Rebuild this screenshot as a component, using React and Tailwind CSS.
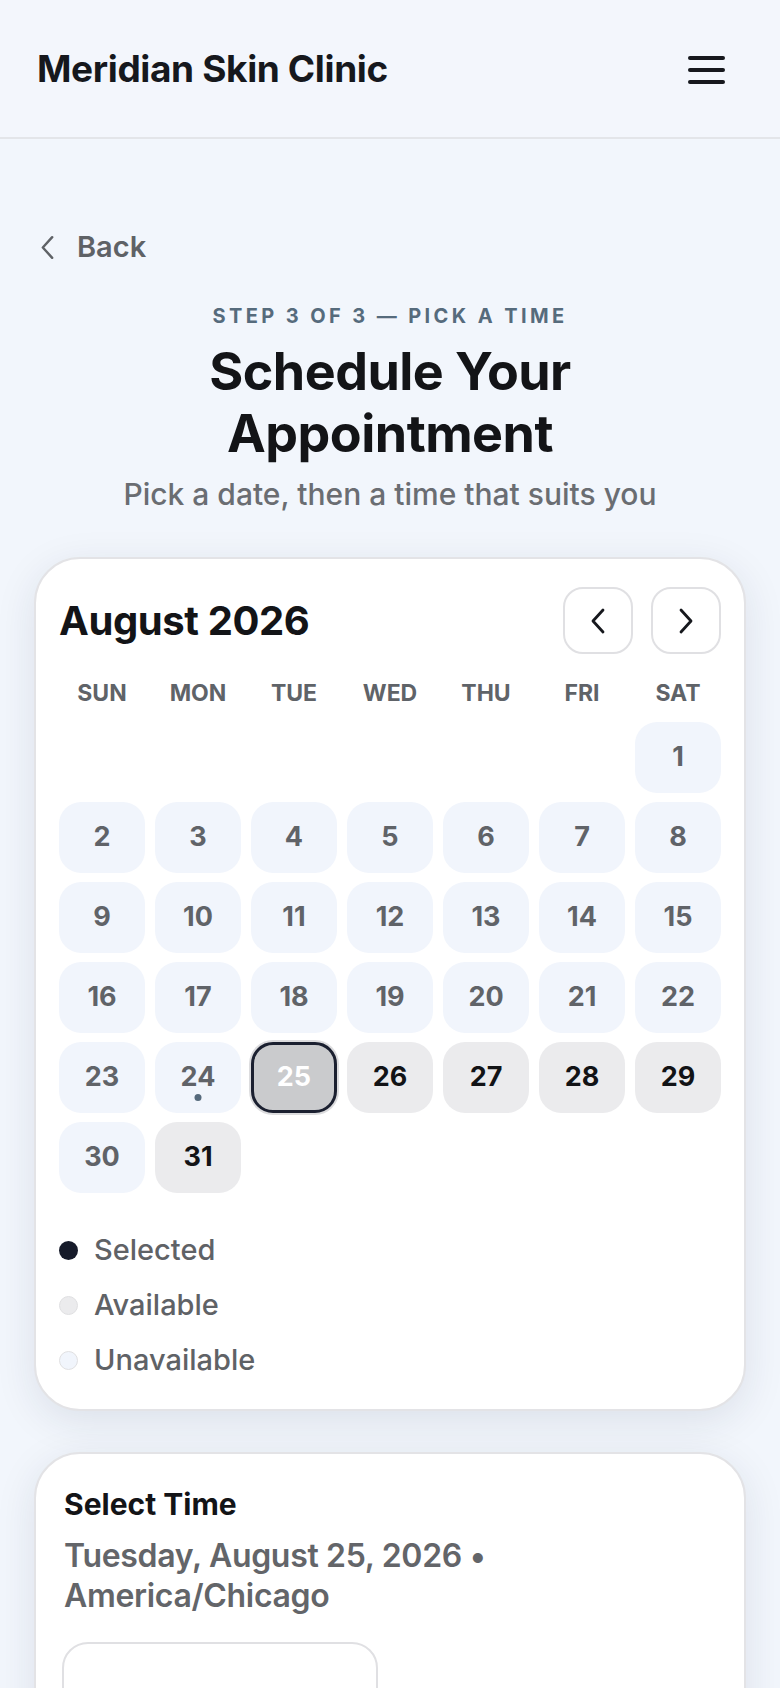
import React, { useState } from 'react';

const DAYS = ['SUN', 'MON', 'TUE', 'WED', 'THU', 'FRI', 'SAT'];

// August 2026 starts on a Saturday
const START_OFFSET = 6;
const DAYS_IN_MONTH = 31;
const AVAILABLE = [25, 26, 27, 28, 29, 31];
const TODAY = 24;

function ChevronLeft({ className, width = 2.6 }) {
    return (
        <svg viewBox="0 0 16 26" className={className} fill="none" stroke="currentColor" strokeWidth={width} strokeLinecap="round" strokeLinejoin="round">
            <polyline points="13,2 3,13 13,24" />
        </svg>
    );
}

function ChevronRight({ className, width = 2.6 }) {
    return (
        <svg viewBox="0 0 16 26" className={className} fill="none" stroke="currentColor" strokeWidth={width} strokeLinecap="round" strokeLinejoin="round">
            <polyline points="3,2 13,13 3,24" />
        </svg>
    );
}

function DayCell({ day, selected, onSelect }) {
    if (!day) return <div className="h-[71px]" />;

    const available = AVAILABLE.includes(day);

    if (day === selected) {
        return (
            <button className="h-[71px] rounded-[22px] bg-[#cacbcd] border-[3px] border-[#1b2030] shadow-[0_0_0_2px_#dcdcde] flex items-center justify-center text-[27px] font-bold text-white">
                {day}
            </button>
        );
    }

    return (
        <button
            onClick={() => available && onSelect(day)}
            className={
                available
                    ? 'relative h-[71px] rounded-[22px] bg-[#ebebed] flex items-center justify-center text-[27px] font-bold text-[#121316]'
                    : 'relative h-[71px] rounded-[22px] bg-[#f1f5fc] flex items-center justify-center text-[27px] font-bold text-[#606368]'
            }
        >
            {day}
            {day === TODAY && <span className="absolute left-1/2 -translate-x-1/2 bottom-[12px] w-[7px] h-[7px] rounded-full bg-[#566a7c]" />}
        </button>
    );
}

export default function App() {
    const [selected, setSelected] = useState(25);

    const cells = [];
    for (let i = 0; i < START_OFFSET; i++) cells.push(null);
    for (let d = 1; d <= DAYS_IN_MONTH; d++) cells.push(d);

    return (
        <div className="h-[1688px] overflow-hidden bg-[#f2f6fc] font-['Inter',sans-serif]">

            {/* Header */}
            <header className="h-[139px] flex items-center justify-between px-[37px] border-b-2 border-[#e3e5e9] bg-[#f3f6fc]">
                <h1 className="text-[37px] font-bold text-[#16181d] tracking-[-0.01em]">Meridian Skin Clinic</h1>
                <button className="w-[37px] flex flex-col gap-[8px] mr-[18px] mt-[2px]">
                    <span className="block h-[4px] rounded-full bg-[#16181d]" />
                    <span className="block h-[4px] rounded-full bg-[#16181d]" />
                    <span className="block h-[4px] rounded-full bg-[#16181d]" />
                </button>
            </header>

            <main className="px-[34px] pt-[91px]">
                {/* Back link */}
                <button className="flex items-center gap-[22px] pl-[6px] text-[#5f6266]">
                    <ChevronLeft className="w-[15px] h-[25px]" />
                    <span className="text-[29px] font-semibold leading-[34px]">Back</span>
                </button>

                {/* Title block */}
                <div className="mt-[38px] text-center">
                    <p className="text-[20px] leading-[28px] font-bold tracking-[0.17em] text-[#566b7c]">STEP 3 OF 3 — PICK A TIME</p>
                    <h2 className="mt-[11px] mx-auto max-w-[560px] text-[52px] leading-[62px] font-bold text-[#131417] tracking-[-0.01em]">Schedule Your Appointment</h2>
                    <p className="mt-[12px] text-[30px] leading-[34px] font-medium text-[#6a6d72]">Pick a date, then a time that suits you</p>
                </div>

                {/* Calendar card */}
                <section className="mt-[46px] bg-white border-2 border-[#e3e3e6] rounded-[46px] px-[23px] pt-[28px] pb-[32px] shadow-[0_10px_40px_rgba(30,40,70,0.10)]">
                    <div className="flex items-center justify-between">
                        <h3 className="text-[40px] font-bold text-[#131417] tracking-[-0.01em]">August 2026</h3>
                        <div className="flex gap-[18px]">
                            <button className="w-[70px] h-[67px] rounded-[20px] border-2 border-[#e0e0e3] flex items-center justify-center text-[#16181d]">
                                <ChevronLeft className="w-[16px] h-[26px]" width={2.8} />
                            </button>
                            <button className="w-[70px] h-[67px] rounded-[20px] border-2 border-[#e0e0e3] flex items-center justify-center text-[#16181d]">
                                <ChevronRight className="w-[16px] h-[26px]" width={2.8} />
                            </button>
                        </div>
                    </div>

                    <div className="mt-[24px] grid grid-cols-7 gap-x-[10px]">
                        {DAYS.map(d => (
                            <div key={d} className="h-[30px] flex items-center justify-center text-[23px] font-bold text-[#5f6368]">{d}</div>
                        ))}
                    </div>

                    <div className="mt-[14px] grid grid-cols-7 gap-x-[10px] gap-y-[9px]">
                        {cells.map((day, i) => (
                            <DayCell key={i} day={day} selected={selected} onSelect={setSelected} />
                        ))}
                    </div>

                    {/* Legend */}
                    <div className="mt-[40px] flex flex-col gap-[21px]">
                        <div className="flex items-center gap-[16px]">
                            <span className="w-[19px] h-[19px] rounded-full bg-[#161b2a]" />
                            <span className="text-[29px] leading-[34px] font-medium text-[#5f6266]">Selected</span>
                        </div>
                        <div className="flex items-center gap-[16px]">
                            <span className="w-[19px] h-[19px] rounded-full bg-[#ebebed] border border-[#e0e0e2]" />
                            <span className="text-[29px] leading-[34px] font-medium text-[#5f6266]">Available</span>
                        </div>
                        <div className="flex items-center gap-[16px]">
                            <span className="w-[19px] h-[19px] rounded-full bg-[#f1f5fc] border border-[#e0e0e2]" />
                            <span className="text-[29px] leading-[34px] font-medium text-[#5f6266]">Unavailable</span>
                        </div>
                    </div>
                </section>

                {/* Time selection */}
                <section className="mt-[41px] bg-white border-2 border-[#e3e3e6] rounded-[46px] px-[28px] pt-[32px] pb-[32px] shadow-[0_10px_40px_rgba(30,40,70,0.10)]">
                    <h3 className="text-[30px] leading-[36px] font-bold text-[#131417]">Select Time</h3>
                    <p className="mt-[14px] text-[32px] leading-[40px] font-semibold text-[#636569] tracking-[-0.01em]">Tuesday, August 25, 2026 • America/Chicago</p>
                    <div className="mt-[26px] grid grid-cols-2 gap-[22px] -ml-[2px]">
                        <button className="h-[130px] rounded-[26px] border-2 border-[#e0e0e3] bg-white" aria-label="Time slot" />
                    </div>
                </section>
            </main>
        </div>
    );
}
